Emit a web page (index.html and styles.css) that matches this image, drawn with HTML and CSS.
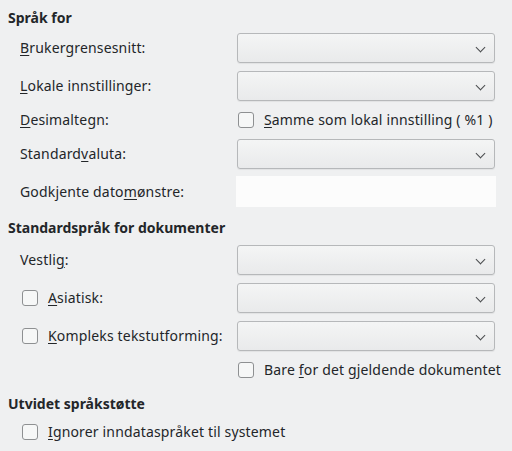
FILE: index.html
```html
<!DOCTYPE html>
<html lang="no">
<head>
<meta charset="utf-8">
<link rel="stylesheet" href="styles.css">
</head>
<body>
<div class="page">
  <div class="heading h1">Språk for</div>
  <div class="row r-combo first">
    <div class="label"><u>B</u>rukergrensesnitt:</div>
    <div class="combo"><span class="chev"></span></div>
  </div>
  <div class="row r-combo">
    <div class="label"><u>L</u>okale innstillinger:</div>
    <div class="combo"><span class="chev"></span></div>
  </div>
  <div class="row r-check">
    <div class="label"><u>D</u>esimaltegn:</div>
    <div class="check-wrap right"><span class="box"></span><span><u>S</u>amme som lokal innstilling ( %1 )</span></div>
  </div>
  <div class="row r-combo">
    <div class="label">Standard<u>v</u>aluta:</div>
    <div class="combo"><span class="chev"></span></div>
  </div>
  <div class="row r-entry">
    <div class="label">Godkjente dato<u>m</u>ønstre:</div>
    <div class="entry"></div>
  </div>

  <div class="heading h2">Standardspråk for dokumenter</div>
  <div class="row r-combo first2">
    <div class="label">Vestli<u>g</u>:</div>
    <div class="combo"><span class="chev"></span></div>
  </div>
  <div class="row r-combo">
    <div class="check-wrap left"><span class="box"></span><span><u>A</u>siatisk:</span></div>
    <div class="combo"><span class="chev"></span></div>
  </div>
  <div class="row r-combo">
    <div class="check-wrap left"><span class="box"></span><span><u>K</u>ompleks tekstutforming:</span></div>
    <div class="combo"><span class="chev"></span></div>
  </div>
  <div class="row r-check">
    <div></div>
    <div class="check-wrap right"><span class="box"></span><span>Bare <u>f</u>or det gjeldende dokumentet</span></div>
  </div>

  <div class="heading h3">Utvidet språkstøtte</div>
  <div class="single r-check">
    <div class="check-wrap left"><span class="box"></span><span><u>I</u>gnorer inndataspråket til systemet</span></div>
  </div>
</div>
</body>
</html>
```
FILE: styles.css
```css
html, body {
  margin: 0;
  padding: 0;
  background: #eff0f1;
}
body {
  font-family: "Noto Sans", "DejaVu Sans", sans-serif;
  font-size: 14px;
  color: #232629;
  width: 512px;
  height: 451px;
  overflow: hidden;
}
.page {
  display: flex;
  flex-direction: column;
  padding: 8px 0 0 0;
  letter-spacing: 0.16px;
}
u {
  text-decoration: underline;
  text-underline-offset: 2px;
  text-decoration-thickness: 1px;
}
.heading {
  font-weight: bold;
  height: 20px;
  line-height: 20px;
  padding-left: 8px;
  white-space: nowrap;
  letter-spacing: 0;
}
.h2 { margin-top: 11px; }
.h3 { margin-top: 13px; }
.row {
  display: grid;
  grid-template-columns: 217px 258px;
  align-items: center;
  padding-left: 20px;
  margin-top: 8px;
  white-space: nowrap;
}
.row.first { margin-top: 5px; }
.row.first2 { margin-top: 7px; }
.r-combo { height: 30px; }
.r-check { height: 22px; }
.r-entry { height: 31px; margin-top: 7px; }
.single {
  display: flex;
  align-items: center;
  padding-left: 20px;
  margin-top: 7px;
  white-space: nowrap;
}
.label {
  line-height: 20px;
}
.combo {
  position: relative;
  box-sizing: border-box;
  height: 30px;
  border: 1px solid #b6b8ba;
  border-radius: 3px;
  background: linear-gradient(#f4f5f5, #e9eaeb);
  box-shadow: 0 1px 1px rgba(0,0,0,0.06);
}
.chev {
  position: absolute;
  right: 10px;
  top: 10px;
  width: 6px;
  height: 6px;
  border-right: 1.2px solid #4a4c4e;
  border-bottom: 1.2px solid #4a4c4e;
  transform: rotate(45deg);
}
.entry {
  box-sizing: border-box;
  height: 31px;
  width: 260px;
  margin-left: -1px;
  background: #fcfcfc;
}
.check-wrap {
  display: flex;
  align-items: center;
  line-height: 20px;
}
.check-wrap.left { margin-left: 2px; gap: 10px; }
.check-wrap.right { margin-left: 1px; gap: 10px; }
.box {
  box-sizing: border-box;
  width: 16px;
  height: 16px;
  flex: none;
  border: 1px solid #8e9092;
  border-radius: 3px;
  background: #f6f7f7;
}
```
